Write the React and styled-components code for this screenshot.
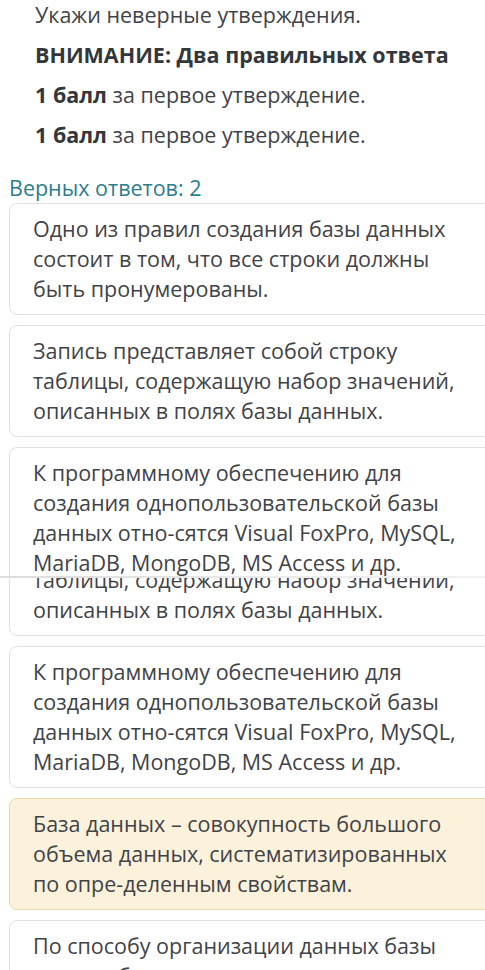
import React from "react";
import styled, { createGlobalStyle } from "styled-components";

const GlobalStyle = createGlobalStyle`
  html, body { margin: 0; padding: 0; background: #ffffff; }
  body { font-family: "Open Sans", "Noto Sans", sans-serif; -webkit-font-smoothing: antialiased; }
`;

const Page = styled.div`
  width: 485px;
  height: 970px;
  overflow: hidden;
  display: flex;
  flex-direction: column;
  background: #ffffff;
`;

const Shot = styled.section`
  flex: ${(p) => (p.$grow ? "1 1 auto" : "0 0 auto")};
  height: ${(p) => (p.$height ? `${p.$height}px` : "auto")};
  overflow: hidden;
`;

const ShotInner = styled.div`
  margin-top: ${(p) => p.$offset || 0}px;
  display: flex;
  flex-direction: column;
`;

const Seam = styled.div`
  height: 2px;
  flex: 0 0 2px;
  background: linear-gradient(90deg, #dcdcdc 0%, #e9e9e9 50%, #f1f1f1 100%);
`;

const Question = styled.div`
  padding-left: 35px;
  display: flex;
  flex-direction: column;
  gap: 10px;
`;

const Line = styled.p`
  margin: 0;
  font-size: 21.5px;
  line-height: 30px;
  color: #3f4347;
  white-space: nowrap;
  b { font-weight: 700; color: #33373b; }
`;

const Hint = styled.div`
  margin: 23px 0 0 9px;
  font-size: 21.5px;
  line-height: 30px;
  color: #2d7d8e;
  white-space: nowrap;
`;

const Options = styled.div`
  display: flex;
  flex-direction: column;
  gap: 10px;
  padding-left: 9px;
  margin-right: -40px;
`;

const Option = styled.div`
  border: 1px solid ${(p) => (p.$selected ? "#ead8a9" : "#e1e1e1")};
  background: ${(p) => (p.$selected ? "#fcf2dc" : "#ffffff")};
  border-radius: 8px;
  padding: 10px 0 10px 23px;
  font-size: 21.5px;
  line-height: 30px;
  color: #3f4347;
  white-space: nowrap;
`;

const optA = (
  <>Одно из правил создания базы данных<br />состоит в том, что все строки должны<br />быть пронумерованы.</>
);
const optB = (
  <>Запись представляет собой строку<br />таблицы, содержащую набор значений,<br />описанных в полях базы данных.</>
);
const optC = (
  <>К программному обеспечению для<br />создания однопользовательской базы<br />данных отно-сятся Visual FoxPro, MySQL,<br />MariaDB, MongoDB, MS Access и др.</>
);
const optD = (
  <>База данных – совокупность большого<br />объема данных, систематизированных<br />по опре-деленным свойствам.</>
);
const optE = (
  <>По способу организации данных базы<br />данных бывают реляционными и<br />нереляционными.</>
);

export default function App() {
  return (
    <>
      <GlobalStyle />
      <Page>
        <Shot $height={576}>
          <Question>
            <Line>Укажи неверные утверждения.</Line>
            <Line><b>ВНИМАНИЕ: Два правильных ответа</b></Line>
            <Line><b>1 балл</b> за первое утверждение.</Line>
            <Line><b>1 балл</b> за первое утверждение.</Line>
          </Question>
          <Hint>Верных ответов: 2</Hint>
          <Options>
            <Option>{optA}</Option>
            <Option>{optB}</Option>
            <Option>{optC}</Option>
          </Options>
        </Shot>
        <Seam />
        <Shot $grow>
          <ShotInner $offset={-54}>
            <Options>
              <Option>{optB}</Option>
              <Option>{optC}</Option>
              <Option $selected>{optD}</Option>
              <Option>{optE}</Option>
            </Options>
          </ShotInner>
        </Shot>
      </Page>
    </>
  );
}
